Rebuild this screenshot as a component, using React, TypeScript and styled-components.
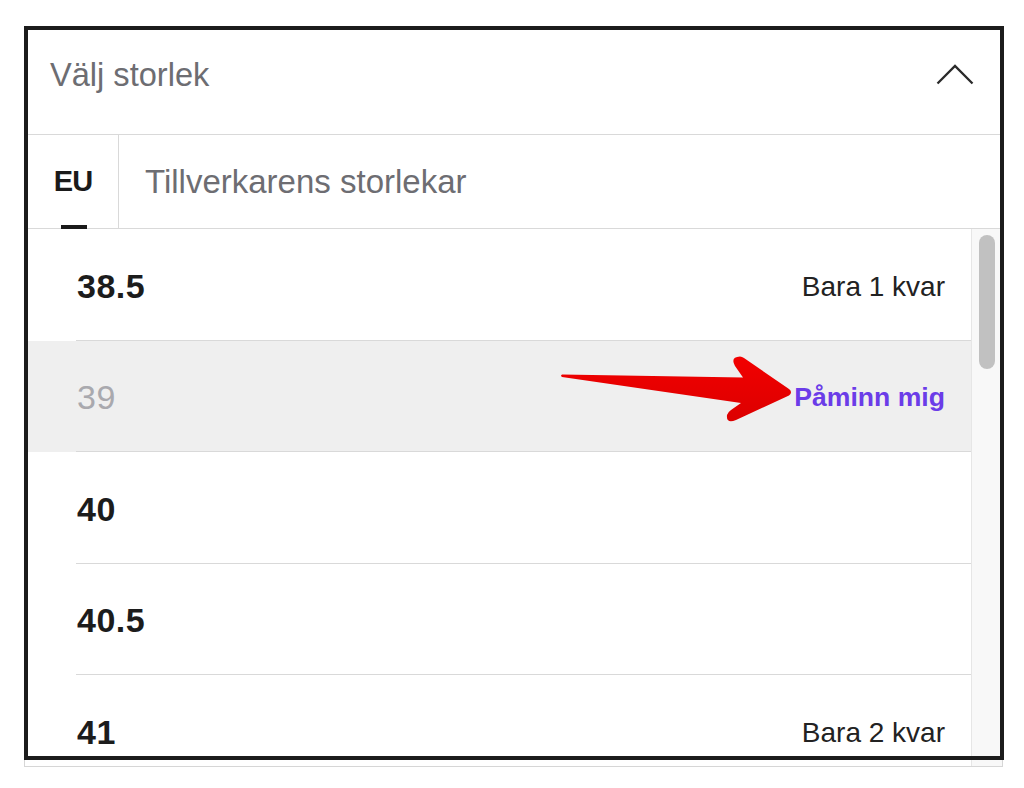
import styled, { createGlobalStyle } from "styled-components";

type Size = {
  label: string;
  note?: string;
  soldOut?: boolean;
};

const sizes: Size[] = [
  { label: "38.5", note: "Bara 1 kvar" },
  { label: "39", soldOut: true },
  { label: "40" },
  { label: "40.5" },
  { label: "41", note: "Bara 2 kvar" },
];

const GlobalStyle = createGlobalStyle`
  html, body {
    margin: 0;
    padding: 0;
    background: #ffffff;
  }
  body {
    font-family: "Liberation Sans", Arial, sans-serif;
    -webkit-font-smoothing: antialiased;
  }
`;

const Stage = styled.div`
  position: relative;
  width: 1024px;
  height: 788px;
  padding: 26px 0 0 24px;
  box-sizing: border-box;
  overflow: hidden;
`;

const Panel = styled.section`
  width: 979px;
  height: 741px;
  box-sizing: border-box;
  border: 1px solid #d6d6d6;
  display: flex;
  flex-direction: column;
  overflow: hidden;
  background: #fff;
`;

const Header = styled.div`
  height: 108px;
  flex: none;
  box-sizing: border-box;
  border-bottom: 1px solid #d9d9d9;
  display: flex;
  align-items: center;
  justify-content: space-between;
  padding: 0 28px 12px 25px;
`;

const Title = styled.span`
  font-size: 32.6px;
  color: #6d6d72;
`;

const Chevron = styled.svg`
  width: 38px;
  height: 21px;
  display: block;
`;

const TabBar = styled.div`
  height: 94px;
  flex: none;
  box-sizing: border-box;
  border-bottom: 1px solid #d9d9d9;
  display: flex;
  align-items: stretch;
`;

const Tab = styled.div<{ $active?: boolean }>`
  position: relative;
  display: flex;
  align-items: center;
  box-sizing: border-box;
  font-size: ${(p) => (p.$active ? "29px" : "33px")};
  font-weight: ${(p) => (p.$active ? 700 : 400)};
  letter-spacing: ${(p) => (p.$active ? "-1px" : "0")};
  color: ${(p) => (p.$active ? "#1a1a1a" : "#6d6d72")};
  ${(p) =>
    p.$active
      ? `
    width: 94px;
    justify-content: center;
    padding-left: 3px;
    border-right: 1px solid #d9d9d9;
  `
      : `
    padding-left: 26px;
  `}
`;

const Indicator = styled.span`
  position: absolute;
  left: 50%;
  bottom: -1px;
  width: 26px;
  height: 4px;
  margin-left: -11px;
  background: #1a1a1a;
`;

const ListArea = styled.div`
  flex: 1;
  min-height: 0;
  display: flex;
`;

const SizeList = styled.div`
  flex: 1;
  overflow: hidden;
`;

const SizeRow = styled.div<{ $soldOut?: boolean }>`
  height: 111.5px;
  background: ${(p) => (p.$soldOut ? "#efefef" : "#ffffff")};
  padding-left: 51px;
  box-sizing: border-box;
`;

const RowInner = styled.div`
  height: 100%;
  box-sizing: border-box;
  border-bottom: 1px solid #d9d9d9;
  display: flex;
  align-items: center;
  justify-content: space-between;
  padding: 4px 26px 0 1px;
`;

const SizeLabel = styled.span<{ $soldOut?: boolean }>`
  font-size: 34px;
  letter-spacing: 0.5px;
  font-weight: ${(p) => (p.$soldOut ? 400 : 700)};
  color: ${(p) => (p.$soldOut ? "#a9a9ae" : "#1c1c1c")};
`;

const StockNote = styled.span`
  font-size: 28px;
  color: #222222;
  padding-top: 2px;
`;

const RemindLink = styled.a`
  font-size: 26.6px;
  font-weight: 700;
  color: #6b3ce8;
  text-decoration: none;
  cursor: pointer;
`;

const ScrollTrack = styled.div`
  width: 31px;
  flex: none;
  box-sizing: border-box;
  background: #f8f8f8;
  border-left: 1px solid #e6e6e6;
  padding: 6px 7px 0 7px;
`;

const ScrollThumb = styled.div`
  height: 134px;
  border-radius: 8px;
  background: #c1c1c1;
`;

const Frame = styled.div`
  position: absolute;
  left: 24px;
  top: 26px;
  width: 980px;
  height: 734px;
  box-sizing: border-box;
  border: 4px solid #1c1c1c;
  pointer-events: none;
`;

const Arrow = styled.svg`
  position: absolute;
  left: 550px;
  top: 345px;
  width: 260px;
  height: 90px;
  pointer-events: none;
`;

export default function App() {
  return (
    <>
      <GlobalStyle />
      <Stage>
        <Panel>
          <Header>
            <Title>Välj storlek</Title>
            <Chevron viewBox="0 0 38 21">
              <polyline
                points="1.5,19.5 19,2 36.5,19.5"
                fill="none"
                stroke="#2a2a2a"
                strokeWidth="2.3"
              />
            </Chevron>
          </Header>
          <TabBar>
            <Tab $active>
              EU
              <Indicator />
            </Tab>
            <Tab>Tillverkarens storlekar</Tab>
          </TabBar>
          <ListArea>
            <SizeList>
              {sizes.map((s) => (
                <SizeRow key={s.label} $soldOut={s.soldOut}>
                  <RowInner>
                    <SizeLabel $soldOut={s.soldOut}>{s.label}</SizeLabel>
                    {s.soldOut ? (
                      <RemindLink>Påminn mig</RemindLink>
                    ) : s.note ? (
                      <StockNote>{s.note}</StockNote>
                    ) : null}
                  </RowInner>
                </SizeRow>
              ))}
            </SizeList>
            <ScrollTrack>
              <ScrollThumb />
            </ScrollTrack>
          </ListArea>
        </Panel>
        <Frame />
        <Arrow viewBox="0 0 260 90">
          <defs>
            <linearGradient id="arrowFill" x1="0" y1="0" x2="0" y2="1">
              <stop offset="0" stopColor="#f20000" />
              <stop offset="1" stopColor="#dc0000" />
            </linearGradient>
          </defs>
          <path
            d="M 12 29.5 L 193 32.5 L 185 21 Q 180 12 190 11.5 Q 192 11.5 194 13 L 239 44 Q 243 47 239 50.5 L 186 75 Q 176 79 177 70 Q 178 67 181 65 L 191 58 L 12 32 Q 10 30.8 12 29.5 Z"
            fill="url(#arrowFill)"
          />
        </Arrow>
      </Stage>
    </>
  );
}
